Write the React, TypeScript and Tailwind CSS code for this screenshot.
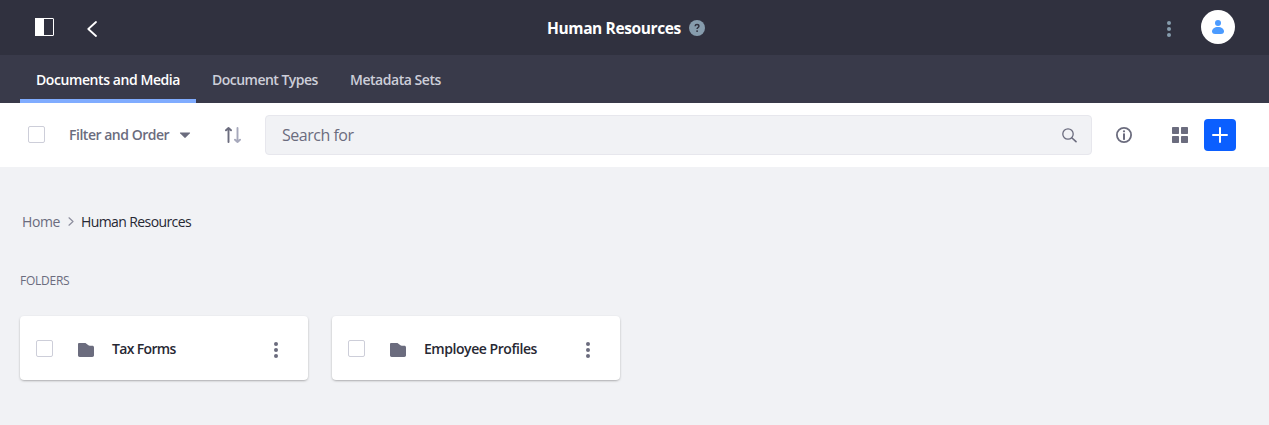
import React from "react";

function Dots({ className }: { className: string }) {
  return (
    <svg width="16" height="16" viewBox="0 0 16 16" className={className} fill="currentColor">
      <circle cx="8" cy="2" r="2" />
      <circle cx="8" cy="8" r="2" />
      <circle cx="8" cy="14" r="2" />
    </svg>
  );
}

function Checkbox() {
  return <span className="block size-[17px] shrink-0 rounded-[2px] border border-[#cdced9] bg-white" />;
}

function FolderCard({ name, label }: { name: string; label: string }) {
  return (
    <div className="flex h-16 w-72 items-center rounded bg-white pl-4 shadow-[0_1px_3px_-1px_rgba(0,0,0,0.6)]">
      <Checkbox />
      <svg width="16" height="14" viewBox="0 0 16 14" className="mt-1 ml-[25px] shrink-0" fill="#6b6c7e">
        <path d="M0 1.200C0 .5.5 0 1.200 0h5.600c.5 0 .9.100 1.300.4L10.400 2.300c.4.300.8.500 1.300.5H14.300c1 0 1.700.7 1.700 1.600V12.300c0 1-.7 1.700-1.700 1.700H1.700C.7 14 0 13.300 0 12.300Z" />
      </svg>
      <span className={`mt-0.5 ml-[18px] flex-1 whitespace-nowrap text-sm font-semibold text-[#272833] ${label}`}>{name}</span>
      <Dots className="mt-1 mr-6 shrink-0 text-[#6b6c7e]" />
    </div>
  );
}

export default function App() {
  return (
    <div className="h-[425px] w-full overflow-hidden bg-[#f1f2f5] font-['Open_Sans','Noto_Sans',sans-serif]">
      <header className="flex h-[55px] items-center bg-[#30313f]">
        <svg width="19" height="18" viewBox="0 0 19 18" className="mb-px ml-[35px] shrink-0">
          <rect x=".5" y=".5" width="18" height="17" rx=".5" fill="none" stroke="#fff" />
          <path d="M0 0h9v18H0z" fill="#fff" />
        </svg>
        <svg width="10" height="16" viewBox="0 0 10 16" className="mt-[3px] ml-[33px] shrink-0" fill="none" stroke="#fff" strokeWidth="1.800" strokeLinecap="round" strokeLinejoin="round">
          <path d="M9 1 1.300 8 9 15" />
        </svg>
        <div className="ml-[450px] flex w-[158px] items-center justify-between">
          <h1 className="whitespace-nowrap text-[15.5px] leading-6 font-bold tracking-[-0.38px] text-white">Human Resources</h1>
          <svg width="16" height="16" viewBox="0 0 16 16" className="mt-px shrink-0">
            <circle cx="8" cy="8" r="8" fill="#869cad" />
            <path d="M6.100 6.300C6.200 5.100 7 4.600 8 4.600c1.100 0 1.900.6 1.900 1.600C9.900 7.500 8.100 7.500 8.100 9" fill="none" stroke="#30313f" strokeWidth="1.500" />
            <circle cx="8.100" cy="11.100" r=".95" fill="#30313f" />
          </svg>
        </div>
        <Dots className="mt-[3px] ml-auto text-[#869cad]" />
        <span className="mr-[34px] mb-px ml-6 flex size-[34px] items-center justify-center rounded-full bg-white">
          <svg width="12" height="14" viewBox="0 0 12 14" fill="#4b9bff">
            <circle cx="6" cy="3" r="3" />
            <path d="M0 11.500C0 9 2.500 7.100 6 7.100s6 1.900 6 4.400C12 13.200 10.500 14 9 14H3c-1.500 0-3-.8-3-2.500Z" />
          </svg>
        </span>
      </header>

      <nav className="flex h-12 bg-[#393a4a] pl-5 text-sm font-semibold whitespace-nowrap text-[#cdced9]">
        <a className="flex w-44 items-center border-b-4 border-[#80acff] pt-1.5 pl-4 tracking-[-0.42px] text-white">Documents and Media</a>
        <a className="flex w-[138px] items-center pt-0.5 pl-4 tracking-[-0.52px]">Document Types</a>
        <a className="flex items-center pt-0.5 pl-4 tracking-[-0.46px]">Metadata Sets</a>
      </nav>

      <div className="flex h-16 items-center bg-white pl-7 text-[#6b6c7e]">
        <div className="mb-px">
          <Checkbox />
        </div>
        <span className="ml-6 w-[101px] whitespace-nowrap text-sm font-semibold tracking-[-0.48px]">Filter and Order</span>
        <svg width="12" height="7" viewBox="0 0 12 7" className="ml-[9px] shrink-0" fill="currentColor">
          <path d="M1.500.500h9c.6 0 .7.400.400.800L6.700 5.600c-.4.400-1 .4-1.400 0L1.100 1.300C.8.900.9.500 1.500.500Z" />
        </svg>
        <svg width="16" height="16" viewBox="0 0 16 16" className="ml-[34px] shrink-0" fill="none" strokeWidth="1.900" strokeLinecap="round" strokeLinejoin="round">
          <path d="M3.500 15V1M1 3.300 3.500 1 6 3.300" stroke="#6b6c7e" />
          <path d="M12.500 1V15M10 12.700l2.500 2.300 2.500-2.300" stroke="#a7a9bc" />
        </svg>
        <div className="ml-6 flex h-10 w-[827px] items-center justify-between rounded border border-[#e7e7ed] bg-[#f1f2f5] pr-[14px] pl-4">
          <span className="text-base tracking-[-0.48px]">Search for</span>
          <svg width="15" height="15" viewBox="0 0 15 15" fill="none" stroke="currentColor" strokeLinecap="round">
            <circle cx="6" cy="6" r="5.200" strokeWidth="1.300" />
            <path d="m10 10 4 3.700" strokeWidth="1.600" />
          </svg>
        </div>
        <svg width="16" height="16" viewBox="0 0 16 16" className="ml-6 shrink-0" fill="currentColor">
          <circle cx="8" cy="8" r="7.100" fill="none" stroke="currentColor" strokeWidth="1.800" />
          <circle cx="8" cy="4.300" r="1.100" />
          <rect x="7" y="6.200" width="2" height="6.800" rx=".8" />
        </svg>
        <svg width="16" height="16" viewBox="0 0 16 16" className="ml-10 shrink-0" fill="currentColor">
          <rect width="7" height="7" rx=".7" />
          <rect x="9" width="7" height="7" rx=".7" />
          <rect y="9" width="7" height="7" rx=".7" />
          <rect x="9" y="9" width="7" height="7" rx=".7" />
        </svg>
        <button className="ml-4 flex size-8 items-center justify-center rounded bg-[#0b5fff]">
          <svg width="16" height="16" viewBox="0 0 16 16" stroke="#fff" strokeWidth="2" strokeLinecap="round">
            <path d="M8 1v14M1 8h14" />
          </svg>
        </button>
      </div>

      <main className="px-5 pt-[45px]">
        <div className="flex h-5 items-center pl-0.5 text-sm whitespace-nowrap">
          <span className="w-[38px] tracking-[-0.4px] text-[#6b6c7e]">Home</span>
          <svg width="6" height="9" viewBox="0 0 6 9" className="mb-px ml-2 shrink-0" fill="none" stroke="#8c8d9d" strokeWidth="1.200" strokeLinecap="round" strokeLinejoin="round">
            <path d="m1 .8 4 3.700-4 3.700" />
          </svg>
          <span className="ml-[7px] tracking-[-0.6px] text-[#272833]">Human Resources</span>
        </div>
        <h2 className="mt-10 text-xs leading-[18px] font-medium tracking-[-0.25px] text-[#6b6c7e]">FOLDERS</h2>
        <div className="mt-[26px] flex gap-6">
          <FolderCard name="Tax Forms" label="tracking-[-0.65px]" />
          <FolderCard name="Employee Profiles" label="tracking-[-0.45px]" />
        </div>
      </main>
    </div>
  );
}
